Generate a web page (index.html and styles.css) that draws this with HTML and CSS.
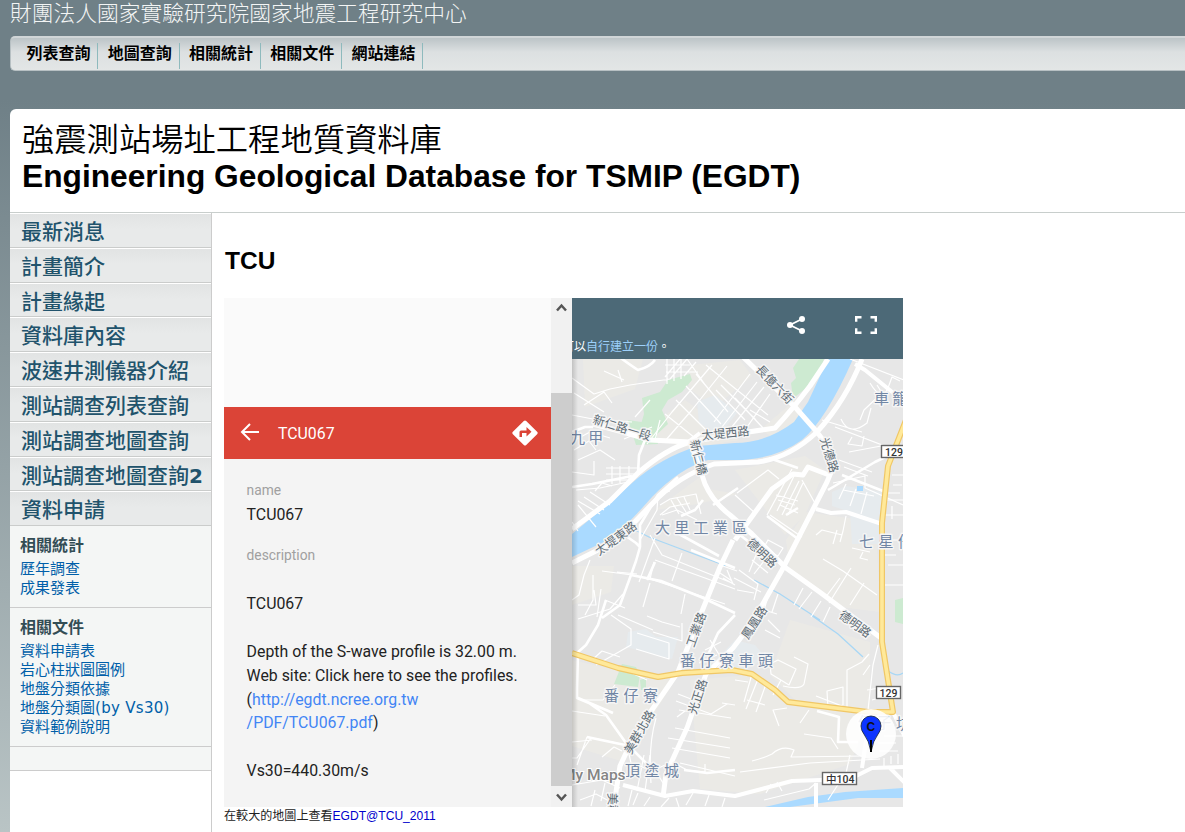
FILE: index.html
```html
<!DOCTYPE html>
<html lang="zh-Hant">
<head>
<meta charset="utf-8">
<title>EGDT</title>
<link rel="stylesheet" href="styles.css">
</head>
<body>
<div class="org">財團法人國家實驗研究院國家地震工程研究中心</div>
<nav class="topnav"><a>列表查詢</a><a>地圖查詢</a><a>相關統計</a><a>相關文件</a><a>網站連結</a></nav>
<div class="page">
<header class="title"><h1><span class="zh">強震測站場址工程地質資料庫</span><span class="en">Engineering Geological Database for TSMIP (EGDT)</span></h1></header>
<div class="columns">
<aside class="side">
<div class="menu"><a>最新消息</a><a>計畫簡介</a><a>計畫緣起</a><a>資料庫內容</a><a>波速井測儀器介紹</a><a>測站調查列表查詢</a><a>測站調查地圖查詢</a><a>測站調查地圖查詢<b>2</b></a><a>資料申請</a></div>
<section class="box stats"><h3>相關統計</h3><a>歷年調查</a><a>成果發表</a></section>
<section class="box docs"><h3>相關文件</h3><a>資料申請表</a><a>岩心柱狀圖圖例</a><a>地盤分類依據</a><a>地盤分類圖<span class="latin">(by Vs30)</span></a><a>資料範例說明</a></section>
<section class="box blank"></section>
</aside>
<main class="main">
<h2>TCU</h2>
<div class="embed">
<div class="panel">
<div class="spacer"></div>
<div class="redbar">
<svg class="back" width="20" height="20" viewBox="0 0 20 20" fill="none" stroke="#fff" stroke-width="2"><path d="M19 10H2M10 2L2 10l8 8"/></svg>
<span>TCU067</span>
<svg width="26" height="26" viewBox="0 0 26 26"><path fill="#fff" d="M11.8 1q1.2-1.2 2.4 0l10.900 10.800q1.200 1.200 0 2.400l-10.900 10.800q-1.200 1.200-2.400 0L.9 14.200q-1.200-1.200 0-2.400z"/><path fill="#db4437" d="M7.500 17v-5q0-1.500 1.500-1.500h5.500V7l5 4.800-5 4.700V13H10v4z"/></svg>
</div>
<div class="details">
<div class="label">name</div><div class="value">TCU067</div>
<div class="label second">description</div>
<div class="desc"><br>TCU067<br><br>Depth of the S-wave profile is 32.00 m.<br>Web site: Click here to see the profiles.<br>(<a>http://egdt.ncree.org.tw<br>/PDF/TCU067.pdf</a>)<br><br>Vs30=440.30m/s</div>
</div>
</div>
<div class="scroll">
<svg width="21" height="21" viewBox="0 0 21 21"><path d="M6 12.500l4.500-5 4.500 5" fill="none" stroke="#555" stroke-width="2.500"/></svg>
<i></i>
<svg width="21" height="21" viewBox="0 0 21 21"><path d="M6 8.500l4.500 5 4.500-5" fill="none" stroke="#555" stroke-width="2.500"/></svg>
</div>
<div class="map">
<div class="mapbar">
<div class="icons">
<svg width="18" height="18" viewBox="0 0 18 18"><path d="M15 3L3 9l12 6" fill="none" stroke="#fff" stroke-width="1.800"/><g fill="#fff"><circle cx="15" cy="3" r="3"/><circle cx="3" cy="9" r="3"/><circle cx="15" cy="15" r="3"/></g></svg>
<svg width="22" height="18" viewBox="0 0 22 18" fill="none" stroke="#fff" stroke-width="2.400"><path d="M6.500 1.200H1.200v4.500M15.500 1.200h5.300v4.500M1.200 12.300v4.500h5.300M20.800 12.300v4.500h-5.300"/></svg>
</div>
<p><span>可以<a>自行建立一份</a>。</span></p>
</div>
<svg class="canvas" width="331" height="448" viewBox="572 359 331 448">
<defs><linearGradient id="edge"><stop stop-color="#000" stop-opacity=".16"/><stop offset="1" stop-color="#000" stop-opacity="0"/></linearGradient></defs>
<rect x="572" y="359" width="331" height="448" fill="#e7e7e7"/>
<g fill="#ebeae6">
<path d="M583 359h60l-8 30-50 18zM690 365l50-5 12 16-38 32-25-20zM640 435l45-35 55 40-52 8zM760 430l35-30 22 25-30 20zM655 510l45-33 8 12 30 5-40 10zM572 566l42 0-3 26-39 13zM735 470l70-14 20 14-20 45-20 20zM786 540l20-28 70 10 4 90-40-5-50-35zM572 660l80 18 28-6-56 90-52-16zM690 680l60-5 40 29 80 10-20 50-90 30-60-5zM790 620l80 22v70l-75-12-25-25z"/>
</g>
<g fill="#e6ebee"><path d="M697 402l18-7 22 18-18 22-20-12zM832 492l14-6 36 6-2 52-28 0-2-32-18-6zM628 632l18-3 10 8 22 0-6 22-46-12zM735 640l20 5 10 12-20 14h-40z"/></g>
<g fill="#cdead1">
<path d="M799 359h25q-5 22-31 39l-2-15 5-5-3-10zM642 398l18-6 8-12 22-6 2 6-10 12-14 8-6 10 6 14-14 13-16-3 6-20zM628 420l27 4 3 20-22 1zM622 664l14 3 4 8-2 12-24-3zM895 600l8-2v26l-8-2zM640 680l6-2v12h-5z"/>
</g>
<g fill="#aadaff">
<path d="M828 359L808 402 794 422Q766 443 735 443L698 446Q660 458 632 483Q604 508 572 534V557L608 540Q624 529 652 497Q680 468 708 460L735 460Q774 460 802 440Q826 420 853 359z"/>
<path d="M765 807L808 797 845 792 903 788V798L858 798 790 807zM857 486h6v5h-6z"/>
</g>
<g fill="none" stroke="#a8d7f5" stroke-width="1.300"><path d="M635 530l14 7 77 29M754 580l26 14 40 26M811 615l27 19 25 23M887 670q10 8 16 3"/></g>
<g fill="none" stroke="#fff" stroke-width="1.200" stroke-linejoin="round">
<path d="M572 378l22 16 16-5 20-4 40-6 17-20M574 393l30 19M584 405l20-13 8 11M604 371l20 9M618 370l4 12M665 377l15-18M667 359v25M674 359v22M681 359v20M665 365h25M666 372h32M687 359l19 27M696 362l-12 14M712 365l-40 47-25 32M727 366l-36 45-26 30M750 374l-36 48M757 382l-35 45M764 387l-33 41M770 394l-25 36M696 374l32 38M706 365l62 50M716 390l29 30M686 386l35 38M676 400l30 30M665 414l35 28M650 400l-15 17M750 410l20 12M721 385l35 35M735 398l28 30"/>
<path d="M572 415l26 5 34 2M574 450l15-9 7 9M578 460l22-10 15 10M576 490l24-2 28-6M606 468h34M606 474h34M606 480h28M612 466v18M620 466v17M629 466v17M578 501l22 13M584 497l20 13M590 492l20 13M595 491l7-8 10 3M578 505l18 22M572 522l6 9M572 472l22 3 0-14M575 440l15-8 20 6M624 439l28-12M655 440l5-20"/>
<path d="M870 383q12 20 18 5l4-11 8 4M850 359l54 21M860 420l4-10 18-17-5-8M841 419q8 18 26 4l4-15M835 427l68 26M822 420l40 12M852 437l-4 7 14 2 2-10M839 460l33 12M844 467l24 9M849 452l32-6M833 483l32-7 0 12 38 17M846 484l-7 15M856 489l-6 17M867 492l-6 22M843 490l31 6"/>
<path d="M660 505l10-6 26-5 5 20M671 500l8 14M677 498l9 14M684 497l6 13M660 515l10-8 20-4M640 540l17-30 1-15 12-4M662 515l15-5 20 10M650 535l12 20 70 28M655 560l50 18 30 11M654 562l-4 17 75 25M682 553l-10 28M720 565l17 6M637 576l-5-1-30-4M655 538l-16 44M685 594l-4 20M650 583l-7 24M590 560l-6 15-5 20-7 5M578 605h18l-2-15M585 615l8-15 0-25M597 617l4-28M578 619l32-10 13-15M605 600l20 8M617 572l20 2M720 573l12 8M723 578l12 7M727 570l6 14"/>
<path d="M737 493l31-23 11 9M735 495l20 18M767 515l25-46M770 515l32 22M777 511l18-37M782 515l17-34M788 515l15-32M776 495l22 6M778 500l17 5M780 505l18 8M802 480l14 25M816 535l6-5 20 5M846 516l-3 15-3 11M837 530l-4 14M823 559l20 12 34 24M851 568l-22 35M840 578l-15 20M864 583l-14 22M803 588l-9 17M812 592l-13 17M821 601l-10 16M830 607l-7 15M768 540l15 8-5 8-15-7zM758 550l-9 22M767 557l-13 17M752 560l16 13"/>
<path d="M739 570l19 14-4 16M737 590l17 3M734 578l27 14M770 590l-6 20 13 4M778 594l-6 18M852 548l18 4M863 552l-3 6 8 2M883 515h20M885 500h18M880 540h23M880 555h16M888 565h15M883 585h20M885 448h18M892 475h11M893 485h9M888 493h12M892 506v13"/>
<path d="M611 615l20 14 0 16-35 20M618 615l35 15M653 632l29 9 0-18M647 616l15 6 18 5M637 633l32 10 0 16-33-10M592 660l10-9 18 6M581 700l22 0 12-15M572 711l33 5M625 670l22 10M613 725l14 20 4 18M656 718q-8 28-5 65M678 694l13 5M676 701l35 13 16-10M679 710l52 8M675 728l55 10M668 738l62 10M672 748l58 10M680 763l55 13M677 717l8-6M722 703l13 2M710 640l15 24M705 650l16-8M699 663l18-8"/>
<path d="M735 680l13 2M752 674l-8 28M758 679l-12 30M766 684l-10 28M747 700l18 5M770 664l8-4 18 9-7 16-18-11zM783 686q18 4 21-2l4-20-14-7M765 630l15 8M768 620l12 12M787 708l-14 2 6 16M781 680l-8 15M809 710l-9 13M827 691l16-4v18l-15 4zM816 696l26 10M804 734l27 4 7 11M847 710v-40l15-8 7-8M868 710l5-45 5-20M867 690l13-2M872 700l14-4"/>
<path d="M752 761q12-3 20-7 10-9 22-4l-3 7 72-1M740 772l70-9 70-4M766 793l5-9M764 800l45-11 7-6M782 791l-5-9M850 755l-4 18M884 758v8M891 756v8M898 754v10M879 751h19M878 743h18M884 736h19M828 800l11-17M870 665l-7 10"/>
<path d="M577 765l10-28 30 6M591 738l-14 20-5 0M572 742l20-2M602 757l12-10 8 4M572 785l30-5 18 8M580 800l16-6 15 8M595 790l-4 16M605 783l-4 18M632 790l-4 16M638 793l-5 12M650 797l-6 9M669 798l-8 9M676 798l3 9M693 793l-7 12M709 795l-4 11M725 798l-3 9M654 770l18-8 15 8 18 2 0-8M637 765l20 8 6 10M644 755l-7 36M650 755l-5 36"/>
</g>
<g fill="none" stroke="#fff" stroke-width="2.600" stroke-linejoin="round">
<path d="M610 350Q630 365 638 370 650 367 655 360M593 427h-8l-13 5M645 440l-6 15-1 18M572 487l20-3 40-8M626 536l10 7 4 4 0-22 18-30 20-18M640 547l-4 14-5 14-11 30-18 13M631 575l30 6 40 16 34 16M679 534l40 22M703 500l-8 10-14 6M713 505l25-17M606 600l-8 25-12 20-9 8M578 653l-1 35 0 10 12 5 17 12 20 28 22 22M578 698l35 15M587 737l38 8M691 550l44 18M655 562l-8 18M786 515l12-7"/>
<path d="M828 490l47-28 25-12M842 475l41 16M769 458l29 10M767 516l31 23M740 535l18 14M735 645l-20 28M684 770l23 3 28-3M817 711l22 6-1 25 20 0M708 655l10-22 17-18"/>
</g>
<g fill="none" stroke="#fff" stroke-width="5" stroke-linejoin="round">
<path d="M741 355L795 407 817 432Q832 450 834 465L827 482 782 570 752 623 733 648 706 674 687 728 666 774 663 797"/>
<path d="M828 359L810 386Q792 410 775 428L735 434 690 442Q666 449 638 473L610 501 572 529"/>
<path d="M862 359Q846 400 817 432 789 458 758 462L714 464Q678 476 652 504L627 530 602 548 572 563"/>
<path d="M593 424l30 8 27 8 40 2 9 24 6 18q8 18 25 31l22 19 34 34 35 25 60 45"/>
<path d="M733 540l-13 27-22 54-20 51-44 64-14 30-7 45M829 475l-21-8-5 8-10-1-21 15-37 51"/>
<path stroke-width="4" d="M816 509l15 4 15-1 36 12M700 433l-13 10M855 364l10 6 37 30M623 785l42 11 28-5 42 5 57-15 58-2 22-11 31-1M862 768l6-40M893 712l12 25M890 768l15 15M816 781v26"/>
</g>
<g fill="none" stroke-linejoin="round"><path d="M906 420L888 466 882 523V642L893 712H868L788 702 775 690 752 674 732 670 682 673 658 677 618 668 572 653" stroke="#f0c766" stroke-width="6"/><path d="M906 420L888 466 882 523V642L893 712H868L788 702 775 690 752 674 732 670 682 673 658 677 618 668 572 653" stroke="#ffe99a" stroke-width="3.600"/></g>
<g class="roadlabel">
<text transform="translate(755 370) rotate(46)">長億六街</text><text transform="translate(592 423) rotate(17)">新仁路一段</text><text transform="translate(702 440) rotate(-6)">太堤西路</text><text transform="translate(599 556) rotate(-36)">太堤東路</text>
<text transform="translate(690 441) rotate(76)">新仁橋</text><text transform="translate(820 439) rotate(73)">光德路</text><text transform="translate(746 544) rotate(43)">德明路</text><text transform="translate(838 617) rotate(36)">德明路</text><text transform="translate(694 648) rotate(-70)">工業路</text><text transform="translate(748 640) rotate(-57)">鳳凰路</text><text transform="translate(696 715) rotate(-72)">光正路</text><text transform="translate(631 755) rotate(-60)">美群北路</text><text transform="translate(608 793) rotate(88)">美群</text>
</g>
<g class="place"><text x="570" y="443">九 甲</text><text x="874" y="404">車 籠</text><text x="655" y="533" textLength="92">大里工業區</text><text x="859" y="547" textLength="54">七星仔</text><text x="680" y="666" textLength="93">番仔寮車頭</text><text x="604" y="701" textLength="54">番仔寮</text><text x="625" y="776" textLength="54">頂塗城</text><text x="858" y="728">仔 子</text><text x="896" y="729">坑</text></g>
<g class="shield"><rect x="881.500" y="445.500" width="28" height="12"/><text x="885" y="455.500">129</text><rect x="876.500" y="686.500" width="24" height="12"/><text x="879.500" y="696.500">129</text><rect x="822.500" y="772.500" width="34" height="12"/><text x="826" y="782.500">中104</text></g>
<text class="mymaps" x="562" y="780">My Maps</text>
<circle cx="871" cy="734" r="25" fill="#fff" opacity=".88"/>
<path d="M870.500 750Q869 741 864.500 735 861 730.500 861 726a10 10 0 0 1 20 0Q881 730.500 877.500 735 873 741 871.500 750z" fill="#0d35ff" stroke="#123" stroke-width=".8"/><path d="M871 740v12" stroke="#000" stroke-width="2"/><text class="pin" x="866.500" y="731">C</text>
<rect x="572" y="359" width="6" height="448" fill="url(#edge)"/>
</svg>
</div>
</div>
<div class="caption">在較大的地圖上查看<a>EGDT@TCU_2011</a></div>
</main>
</div>
</div>
</body>
</html>
```
FILE: styles.css
```css
* { box-sizing: border-box; }
body { margin: 0; height: 832px; overflow: hidden; padding-left: 10px; background: linear-gradient(#6f8087, #6f8087 100px, #b9c4c5 832px); font-family: "DejaVu Sans", "Noto Sans CJK TC", sans-serif; }
h1, h2, h3, p { margin: 0; }
.org { height: 36px; font: 300 21.75px/24px "Noto Sans CJK TC", sans-serif; color: #f3f5f5; white-space: nowrap; }
.topnav { display: flex; height: 35px; padding: 5px 0 0 6px; border: 1px solid #b7c0c3; border-top: 2px solid #d0d5d7; border-right: 0; border-radius: 5px 0 0 5px; background: linear-gradient(#bcc4c7, #dce0e1 14px, #e3e6e6); }
.topnav a { width: 81.25px; height: 26px; padding-left: 9.5px; border-right: 1px solid #8ebabd; font: bold 16px/19px "Noto Sans CJK TC", sans-serif; white-space: nowrap; }
.page { margin-top: 38px; background: #fff; height: 723px; border-top-left-radius: 6px; }
.title { height: 104px; padding: 11px 0 0 12px; border-bottom: 1px solid #c8cecc; }
.title span { display: block; white-space: nowrap; line-height: 38px; }
.title .zh { font-family: "Noto Sans CJK TC", sans-serif; font-weight: 350; font-size: 32.3px; line-height: 34px; height: 37px; }
.title .en { font-family: "Liberation Sans", sans-serif; font-size: 31.73px; }
.columns { display: flex; height: 619px; }
.side { width: 202px; border-right: 1px solid #ccc; flex: none; }
.menu a { display: block; height: 34.8px; padding-left: 11px; border-bottom: 1px solid #cacccb; box-shadow: inset 0 1px #fff; background: linear-gradient(#e1e3e3, #e8eaea 16px); color: #21536c; font: 500 21px/35px "Noto Sans CJK TC", sans-serif; white-space: nowrap; }
.menu b { font: bold 20px/20px "DejaVu Sans", sans-serif; }
.box { background: #f4f6f5; border-bottom: 1px solid #ccc; padding: 8px 0 0 10px; color: #005fa9; }
.box h3 { font: bold 16px/20px "Noto Sans CJK TC", sans-serif; color: #334d55; margin-bottom: 6px; }
.box a { display: block; font-size: 15px; line-height: 19px; height: 19px; white-space: nowrap; }
.box .latin { letter-spacing: .3px; }
.stats { height: 82px; }
.docs { height: 139px; }
.blank { height: 24px; }
.main { padding: 32px 0 0 12px; font-family: "Liberation Sans", "Noto Sans CJK TC", sans-serif; }
.main h2 { font-size: 24.5px; line-height: 32px; height: 53px; padding-left: 1px; }
.embed { display: flex; width: 679px; height: 509px; overflow: hidden; }
.panel { width: 327px; background: #f4f4f4; font-family: Roboto, sans-serif; font-size: 15.85px; color: #222; }
.spacer { height: 109px; background: #fafafa; }
.redbar { height: 52px; background: #db4437; display: flex; align-items: center; padding: 0 13px 0 16px; color: #fff; }
.back { margin-bottom: 2px; }
.redbar span { flex: 1; padding-left: 18px; }
.details { padding: 21px 0 0 22.6px; }
.label { color: #a0a0a0; font-size: 13.8px; line-height: 20px; }
.value { line-height: 24px; padding-top: 3px; }
.second { margin-top: 18px; }
.desc { line-height: 23.9px; padding-top: 3px; white-space: nowrap; }
.desc a { color: #4285f4; }
.scroll { width: 21px; background: #f1f1f1; display: flex; flex-direction: column; }
.scroll i { height: 393px; margin-top: 74px; background: #cdcdcd; }
.map { width: 331px; }
.mapbar { height: 61px; background: #4c6977; padding-top: 18px; color: #fff; font: 12px "Noto Sans CJK TC", sans-serif; }
.icons { display: flex; justify-content: flex-end; gap: 50px; padding-right: 26px; height: 22px; }
.mapbar p { overflow: hidden; line-height: 16px; white-space: nowrap; }
.mapbar span { margin-left: -10px; }
.mapbar a { color: #9dd0fa; }
.canvas { display: block; }
.roadlabel, .place { font-family: "Noto Sans CJK TC", sans-serif; paint-order: stroke; stroke: #f5f5f5; stroke-width: 3px; stroke-linejoin: round; }
.roadlabel { font-size: 12px; fill: #5d6b74; }
.place { font-size: 15px; fill: #7186a4; }
.shield rect { fill: #fff; stroke: #666; stroke-width: 1.4; }
.shield text { font: 500 10.5px Roboto, "Noto Sans CJK TC", sans-serif; fill: #333; }
.mymaps { font: 500 15.5px Roboto, sans-serif; fill: #858585; stroke: #fff; stroke-width: 2px; paint-order: stroke; }
.pin { font: bold 12px "Liberation Sans", sans-serif; fill: #111; }
.caption { font-size: 12.07px; line-height: 19px; color: #222; white-space: nowrap; }
.caption a { color: #00c; }
```
